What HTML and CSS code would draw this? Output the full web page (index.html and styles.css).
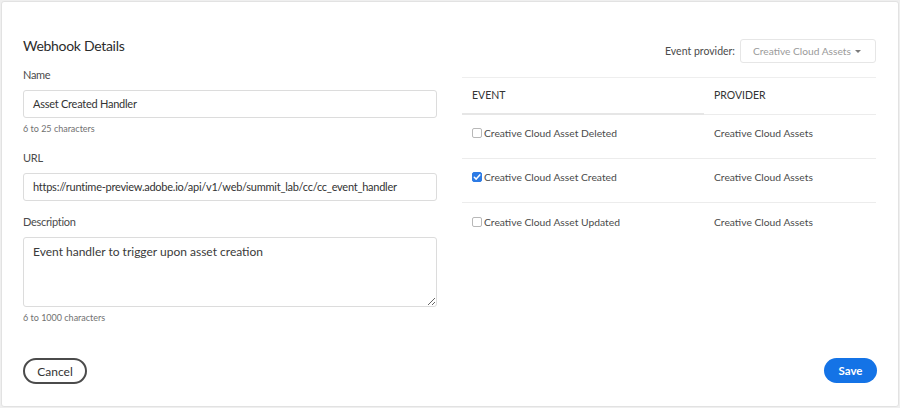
FILE: index.html
```html
<!DOCTYPE html>
<html>
<head>
<meta charset="utf-8">
<link rel="stylesheet" href="styles.css">
</head>
<body>
<div class="card">
  <div class="columns">
    <div class="form">
      <h2 class="title">Webhook Details</h2>
      <div class="label">Name</div>
      <div class="field">Asset Created Handler</div>
      <div class="help">6 to 25 characters</div>
      <div class="label label-url">URL</div>
      <div class="field">https://runtime-preview.adobe.io/api/v1/web/summit_lab/cc/cc_event_handler</div>
      <div class="label label-desc">Description</div>
      <textarea class="area">Event handler to trigger upon asset creation</textarea>
      <div class="help">6 to 1000 characters</div>
    </div>
    <div class="events">
      <div class="provider-row">
        <span class="provider-label">Event provider:</span>
        <div class="dropdown">Creative Cloud Assets<span class="caret"></span></div>
      </div>
      <div class="table">
        <div class="thead">
          <div class="th th-event">EVENT</div>
          <div class="th">PROVIDER</div>
        </div>
        <div class="tr">
          <div class="td"><span class="check"></span>Creative Cloud Asset Deleted</div>
          <div class="td">Creative Cloud Assets</div>
        </div>
        <div class="tr">
          <div class="td"><span class="check checked"><svg viewBox="0 0 10 10" width="10" height="10"><path d="M2.3 5.2 L4.2 7.1 L7.8 2.9" fill="none" stroke="#fff" stroke-width="1.5" stroke-linecap="round" stroke-linejoin="round"/></svg></span>Creative Cloud Asset Created</div>
          <div class="td">Creative Cloud Assets</div>
        </div>
        <div class="tr tr-last">
          <div class="td"><span class="check"></span>Creative Cloud Asset Updated</div>
          <div class="td">Creative Cloud Assets</div>
        </div>
      </div>
    </div>
  </div>
  <div class="footer">
    <button class="btn btn-cancel">Cancel</button>
    <button class="btn btn-save">Save</button>
  </div>
</div>
</body>
</html>
```

FILE: styles.css
```css
html, body {
  margin: 0;
  padding: 0;
  background: #efefef;
}
body {
  font-family: Lato, "Open Sans", sans-serif;
  color: #333;
  width: 900px;
  height: 408px;
}
.card {
  box-sizing: border-box;
  margin: 1px 0 0 1px;
  width: 898px;
  height: 406px;
  background: #fff;
  border: 1px solid #e2e2e2;
  border-radius: 3px;
  padding: 0 21px;
  display: flex;
  flex-direction: column;
}
.columns {
  display: grid;
  grid-template-columns: 414px 414px;
  column-gap: 25px;
}
.form {
  display: flex;
  flex-direction: column;
  padding-top: 34px;
}
.title {
  margin: 0;
  font-size: 14px;
  letter-spacing: -0.3px;
  font-weight: 400;
  line-height: 20px;
  color: #2c2c2c;
}
.label {
  font-size: 11px;
  letter-spacing: -0.3px;
  line-height: 16px;
  color: #4b4b4b;
  margin-top: 11px;
  margin-bottom: 7px;
}
.label-url { margin-top: 15px; }
.label-desc { margin-top: 13px; }
.field {
  box-sizing: border-box;
  height: 28px;
  border: 1px solid #dcdcdc;
  border-radius: 3px;
  padding: 0 9px;
  font-size: 11px;
  letter-spacing: -0.25px;
  line-height: 26px;
  color: #333;
  white-space: nowrap;
  overflow: hidden;
}
.area {
  box-sizing: border-box;
  display: block;
  width: 414px;
  height: 70px;
  margin: 0;
  border: 1px solid #dcdcdc;
  border-radius: 3px;
  padding: 6px 9px;
  font-family: Lato, "Open Sans", sans-serif;
  font-size: 12px;
  line-height: 16px;
  color: #3a3a3a;
  resize: vertical;
  outline: none;
}
.help {
  font-size: 9px;
  line-height: 12px;
  color: #717171;
  margin-top: 5px;
}
.events {
  padding-top: 37px;
  display: flex;
  flex-direction: column;
}
.provider-row {
  display: flex;
  justify-content: flex-end;
  align-items: center;
  gap: 5px;
  height: 24px;
}
.provider-label {
  font-size: 10.5px;
  color: #4b4b4b;
}
.dropdown {
  box-sizing: border-box;
  height: 24px;
  width: 136px;
  border: 1px solid #e6e6e6;
  border-radius: 3px;
  font-size: 10.2px;
  line-height: 22px;
  color: #9a9a9a;
  padding-left: 12px;
  display: flex;
  align-items: center;
  gap: 4px;
}
.caret {
  width: 0;
  height: 0;
  border-left: 3px solid transparent;
  border-right: 3px solid transparent;
  border-top: 3px solid #7a7a7a;
  margin-top: 1px;
}
.table {
  margin-top: 14px;
  border-top: 1px solid #eeeeee;
}
.thead {
  display: grid;
  grid-template-columns: 242px 172px;
  height: 37px;
}
.th {
  box-sizing: border-box;
  font-size: 10.5px;
  color: #333;
  padding-left: 10px;
  display: flex;
  align-items: center;
  padding-bottom: 2px;
  border-bottom: 1px solid #ececec;
}
.th-event {
  border-bottom: 2px solid #e6e6e6;
}
.tr {
  display: grid;
  grid-template-columns: 242px 172px;
  height: 44px;
  border-bottom: 1px solid #ececec;
  box-sizing: border-box;
}
.tr-last { border-bottom: none; }
.td {
  font-size: 10.3px;
  color: #4b4b4b;
  padding-left: 10px;
  display: flex;
  align-items: center;
  padding-bottom: 7px;
}
.check {
  box-sizing: border-box;
  width: 10px;
  height: 10px;
  border: 1px solid #b8b8b8;
  border-radius: 2px;
  margin-right: 2px;
  display: inline-flex;
  flex: none;
}
.check.checked {
  background: #2d7be5;
  border-color: #2d7be5;
  align-items: center;
  justify-content: center;
}
.check.checked svg { display: block; margin: -1px; }
.footer {
  margin-top: auto;
  margin-bottom: 22px;
  display: flex;
  justify-content: space-between;
  align-items: flex-start;
}
.btn {
  font-family: Lato, "Open Sans", sans-serif;
  border-radius: 13px;
  cursor: pointer;
  padding: 0;
}
.btn-cancel {
  width: 64px;
  height: 26px;
  background: #fff;
  border: 2px solid #4b4b4b;
  color: #333;
  font-size: 12px;
}
.btn-save {
  width: 53px;
  height: 25px;
  background: #1473e6;
  border: none;
  color: #fff;
  font-weight: 700;
  font-size: 11.5px;
}
```
